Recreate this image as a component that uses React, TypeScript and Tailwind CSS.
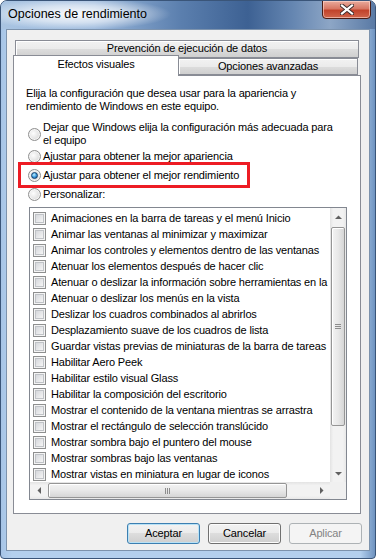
import React from 'react';

const items = [
  'Animaciones en la barra de tareas y el menú Inicio',
  'Animar las ventanas al minimizar y maximizar',
  'Animar los controles y elementos dentro de las ventanas',
  'Atenuar los elementos después de hacer clic',
  'Atenuar o deslizar la información sobre herramientas en la vista',
  'Atenuar o deslizar los menús en la vista',
  'Deslizar los cuadros combinados al abrirlos',
  'Desplazamiento suave de los cuadros de lista',
  'Guardar vistas previas de miniaturas de la barra de tareas',
  'Habilitar Aero Peek',
  'Habilitar estilo visual Glass',
  'Habilitar la composición del escritorio',
  'Mostrar el contenido de la ventana mientras se arrastra',
  'Mostrar el rectángulo de selección translúcido',
  'Mostrar sombra bajo el puntero del mouse',
  'Mostrar sombras bajo las ventanas',
  'Mostrar vistas en miniatura en lugar de iconos',
];

function Checkbox() {
  return (
    <span className="block w-[13px] h-[13px] shrink-0 border border-[#8e8f8f] bg-[#f4f4f4] p-px">
      <span className="block w-full h-full border border-[#c0c3c7] bg-[linear-gradient(135deg,#d6d8dc,#f5f5f5)]" />
    </span>
  );
}

function Radio({ checked }: { checked?: boolean }) {
  return (
    <span className="flex items-center justify-center w-[13px] h-[13px] shrink-0 rounded-full border border-[#8f8f8f] bg-[radial-gradient(circle_at_40%_40%,#fdfdfd,#e4e4e4_55%,#c6c6c6)] shadow-[inset_0_0_0_1px_#f6f6f6]">
      {checked && (
        <span className="block w-[7px] h-[7px] rounded-full border border-[#123f6d] bg-[radial-gradient(circle_at_40%_35%,#c2f0ff,#3d9de0_50%,#10508f)]" />
      )}
    </span>
  );
}

function Arrow({ dir }: { dir: 'up' | 'down' | 'left' | 'right' }) {
  const pts = {
    up: '0,4 3.5,0.5 7,4',
    down: '0,0 3.5,3.5 7,0',
    left: '4,0 0.5,3.5 4,7',
    right: '0,0 3.5,3.5 0,7',
  }[dir];
  const vertical = dir === 'up' || dir === 'down';
  return (
    <svg width={vertical ? 7 : 4} height={vertical ? 4 : 7} viewBox={vertical ? '0 0 7 4' : '0 0 4 7'}>
      <polygon points={pts} fill="#606060" />
    </svg>
  );
}

function Button({ label, kind }: { label: string; kind?: 'default' | 'disabled' }) {
  const base = 'w-[73px] h-[21px] rounded-[3px] border flex items-center justify-center text-[11px]';
  if (kind === 'disabled')
    return <div className={`${base} border-[#adb2b5] bg-[#f4f4f4] text-[#838383]`}>{label}</div>;
  if (kind === 'default')
    return (
      <div className={`${base} border-[#3c7fb1] bg-[linear-gradient(#f2f2f2,#ebebeb_50%,#dddddd_50%,#cfcfcf)] shadow-[inset_0_0_0_1px_#b9e2f6]`}>
        {label}
      </div>
    );
  return (
    <div className={`${base} border-[#707070] bg-[linear-gradient(#f2f2f2,#ebebeb_50%,#dddddd_50%,#cfcfcf)] shadow-[inset_0_0_0_1px_#fcfcfc]`}>
      {label}
    </div>
  );
}

export default function App() {
  return (
    <div className="w-[376px] h-[559px] [font-family:'Liberation_Sans',Arial,sans-serif] text-black">
      <div className="w-full h-full flex flex-col rounded-t-[7px] rounded-b-[4px] border border-[#3a5579] overflow-hidden bg-[linear-gradient(90deg,#a6c4e6,#b4d0ee_3%,#b4d0ee_96%,#6f93c0)]">
        {/* title bar */}
        <div className="h-[28px] shrink-0 flex items-start [background:radial-gradient(ellipse_95px_16px_at_75px_13px,rgba(255,255,255,0.95),rgba(255,255,255,0.55)_55%,rgba(255,255,255,0)),linear-gradient(90deg,#a9c4e2_0%,#9ab8dc_25%,#5b7fae_48%,#3d6193_66%,#6586b1_78%,#8da6c6_88%,#5a7aa5_100%)]">
          <span className="pl-[7px] pt-[5px] text-[12.5px] leading-[16px] text-black">Opciones de rendimiento</span>
          <div className="ml-auto mr-[4px] -mt-px w-[49px] h-[19px] rounded-b-[4px] border border-[#4a1d16] bg-[linear-gradient(#e9ab9d,#d77764_45%,#c2432b_55%,#d0654c)] shadow-[inset_0_0_0_1px_rgba(255,220,210,0.6)] flex items-center justify-center">
            <svg width="14" height="11" viewBox="0 0 14 11">
              <path d="M2 1.5 L12 9.5 M12 1.5 L2 9.5" stroke="#3b2a2a" strokeWidth="4" strokeLinecap="square" />
              <path d="M2 1.5 L12 9.5 M12 1.5 L2 9.5" stroke="#ffffff" strokeWidth="2.2" strokeLinecap="square" />
            </svg>
          </div>
        </div>

        {/* client area */}
        <div className="mx-[5px] mb-[7px] h-[522px] border border-[#7d93ad] bg-[#f0f0f0] flex flex-col text-[11px] leading-[13px] tracking-[-0.15px]">
          {/* tab row 1 */}
          <div className="pt-[10px]">
            <div className="ml-[8px] w-[344px] h-[18px] border border-[#898c95] bg-[linear-gradient(#f2f2f2,#ebebeb_50%,#dddddd_50%,#cfcfcf)] shadow-[inset_1px_1px_0_#fff] pt-[1px] text-center">
              Prevención de ejecución de datos
            </div>
          </div>
          {/* tab row 2 */}
          <div className="-mt-[3px] h-[20px] flex items-start">
            <div className="relative z-10 ml-[6px] w-[166px] h-[21px] border border-b-0 border-[#898c95] bg-white pt-[2px] text-center">
              Efectos visuales
            </div>
            <div className="mt-[3px] w-[179px] h-[17px] border border-l-0 border-[#898c95] bg-[linear-gradient(#f2f2f2,#ebebeb_50%,#dddddd_50%,#cfcfcf)] shadow-[inset_1px_1px_0_#fff] pt-[1px] text-center">
              Opciones avanzadas
            </div>
          </div>

          {/* panel */}
          <div className="ml-[6px] w-[348px] h-[439px] border border-[#898c95] bg-white pt-[11px] pl-[12px]">
            <p>
              Elija la configuración que desea usar para la apariencia y
              <br />
              rendimiento de Windows en este equipo.
            </p>

            <div className="mt-[8px] ml-[2px] flex flex-col">
              <div className="h-[26px] flex items-center gap-[2px]">
                <Radio />
                <span>
                  Dejar que Windows elija la configuración más adecuada para
                  <br />
                  el equipo
                </span>
              </div>
              <div className="h-[19px] flex items-center gap-[2px]">
                <Radio />
                <span>Ajustar para obtener la mejor apariencia</span>
              </div>
              <div className="relative h-[19px] flex items-center gap-[2px]">
                <Radio checked />
                <span>Ajustar para obtener el mejor rendimiento</span>
                <div className="absolute -left-[10px] -top-[4px] w-[232px] h-[26px] border-[3px] border-[#ed1c24]" />
              </div>
              <div className="h-[19px] flex items-center gap-[2px]">
                <Radio />
                <span>Personalizar:</span>
              </div>
            </div>

            {/* list box */}
            <div className="mt-[3px] ml-[3px] w-[318px] h-[293px] border border-[#828790] flex flex-col">
              <div className="h-[274px] flex">
                <div className="w-[300px] pt-[2px] overflow-hidden">
                  {items.map((t) => (
                    <div key={t} className="h-[16px] flex items-center pl-[3px] gap-[5px] whitespace-nowrap">
                      <Checkbox />
                      <span>{t}</span>
                    </div>
                  ))}
                </div>
                {/* vertical scrollbar */}
                <div className="w-[16px] flex flex-col bg-[linear-gradient(90deg,#e3e3e3,#f2f2f2_20%,#f2f2f2_80%,#e8e8e8)]">
                  <div className="h-[17px] flex items-center justify-center">
                    <Arrow dir="up" />
                  </div>
                  <div className="mt-[2px] mx-px h-[199px] rounded-[2px] border border-[#959595] bg-[linear-gradient(90deg,#f3f3f3,#e8e8e8_50%,#d6d6d6)] shadow-[inset_1px_1px_0_#fff] flex flex-col items-center justify-center gap-px">
                    <span className="block w-[6px] h-px bg-[#8d8d8d]" />
                    <span className="block w-[6px] h-px bg-[#8d8d8d]" />
                    <span className="block w-[6px] h-px bg-[#8d8d8d]" />
                  </div>
                  <div className="flex-1" />
                  <div className="h-[17px] flex items-center justify-center">
                    <Arrow dir="down" />
                  </div>
                </div>
              </div>
              {/* horizontal scrollbar */}
              <div className="h-[17px] flex">
                <div className="w-[300px] flex bg-[linear-gradient(#e3e3e3,#f2f2f2_20%,#f2f2f2_80%,#e8e8e8)]">
                  <div className="w-[17px] flex items-center justify-center">
                    <Arrow dir="left" />
                  </div>
                  <div className="ml-px my-px w-[239px] rounded-[2px] border border-[#959595] bg-[linear-gradient(#f3f3f3,#e8e8e8_50%,#d6d6d6)] shadow-[inset_1px_1px_0_#fff] flex items-center justify-center gap-px">
                    <span className="block w-px h-[6px] bg-[#8d8d8d]" />
                    <span className="block w-px h-[6px] bg-[#8d8d8d]" />
                    <span className="block w-px h-[6px] bg-[#8d8d8d]" />
                  </div>
                  <div className="flex-1" />
                  <div className="w-[17px] flex items-center justify-center">
                    <Arrow dir="right" />
                  </div>
                </div>
                <div className="w-[16px] bg-[#f0f0f0]" />
              </div>
            </div>
          </div>

          {/* buttons */}
          <div className="mt-[9px] flex justify-end gap-[8px] pr-[7px]">
            <Button label="Aceptar" kind="default" />
            <Button label="Cancelar" />
            <Button label="Aplicar" kind="disabled" />
          </div>
        </div>
      </div>
    </div>
  );
}
